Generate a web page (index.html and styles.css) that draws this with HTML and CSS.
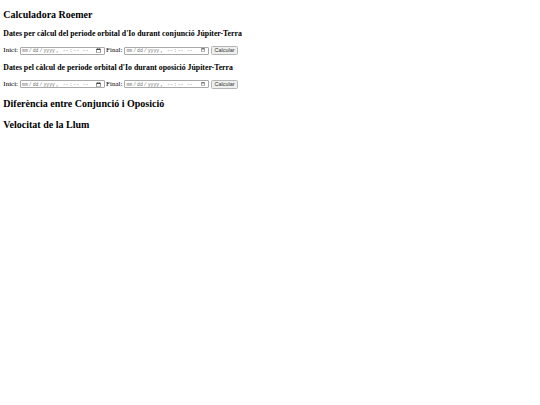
FILE: index.html
```html
<!DOCTYPE html>
<html lang="ca">
<head>
<meta charset="utf-8">
<title>Calculadora Roemer</title>
<link rel="stylesheet" href="styles.css">
</head>
<body>
<h2 class="title">Calculadora Roemer</h2>
<h3 class="subtitle">Dates per càlcul del periode orbital d'Io durant conjunció Júpiter-Terra</h3>
<form class="dates">
<label class="lbl">Inici:</label><input class="dt" type="datetime-local"><label class="lbl">Final:</label><input class="dt" type="datetime-local"><button class="btn" type="button">Calcular</button>
</form>
<h3 class="subtitle">Dates pel càlcul de periode orbital d'Io durant oposició Júpiter-Terra</h3>
<form class="dates">
<label class="lbl">Inici:</label><input class="dt" type="datetime-local"><label class="lbl">Final:</label><input class="dt" type="datetime-local"><button class="btn" type="button">Calcular</button>
</form>
<h2 class="section">Diferència entre Conjunció i Oposició</h2>
<h2 class="section">Velocitat de la Llum</h2>
</body>
</html>
```
FILE: styles.css
```css
body {
  margin: 3.3px;
  font-family: "Liberation Serif", "Times New Roman", serif;
  font-size: 7px;
  color: #000;
  background: #fff;
}
.title,
.section {
  font-size: 10px;
  font-weight: bold;
  margin: 9.3px 0 8.3px;
  line-height: 11.5px;
}
.title {
  margin-top: 5.3px;
  margin-bottom: 9.3px;
}
.subtitle {
  font-size: 7.8px;
  font-weight: bold;
  margin: 7.8px 0;
  line-height: 9px;
}
.dates {
  display: flex;
  align-items: center;
  gap: 1.5px;
  height: 9px;
  margin: 0;
}
.lbl {
  line-height: 9px;
  font-weight: normal;
}
.dt {
  box-sizing: border-box;
  width: 85px;
  height: 8px;
  padding: 0 0.5px;
  margin: 0;
  border: 1px solid #a9a9a9;
  border-radius: 1px;
  font-family: "Liberation Mono", "DejaVu Sans Mono", monospace;
  font-size: 4.8px;
  color: #777;
  background: #fff;
}
.btn {
  box-sizing: border-box;
  height: 9px;
  padding: 0 2.5px;
  margin: 0 0 0 0.5px;
  border: 1px solid #b5b5b5;
  border-radius: 1.5px;
  background: #efefef;
  font-family: "Liberation Sans", Arial, sans-serif;
  font-size: 5.5px;
  color: #333;
  line-height: 7px;
}
```
